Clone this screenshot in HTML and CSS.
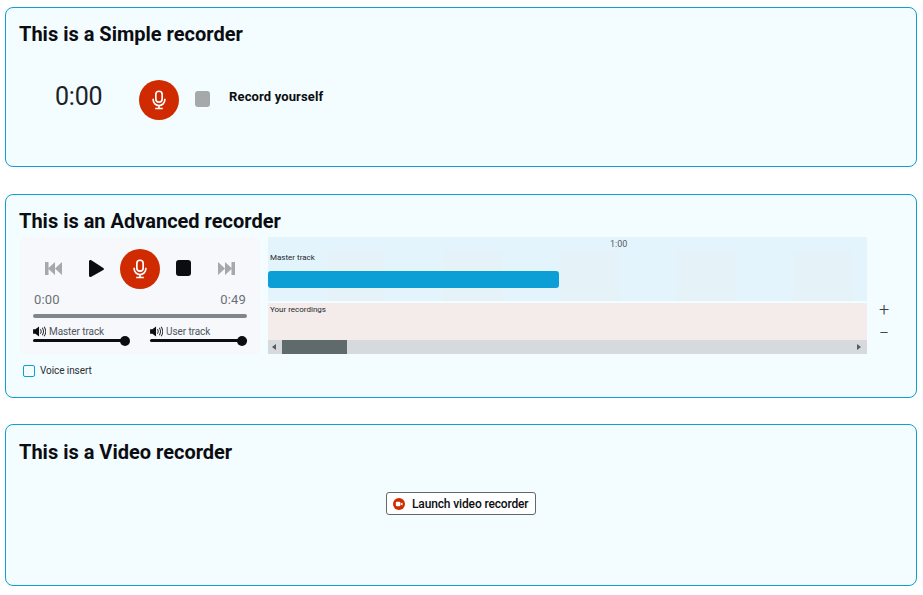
FILE: index.html
```html
<!DOCTYPE html>
<html lang="en">
<head>
<meta charset="utf-8">
<title>Recorders</title>
<link rel="stylesheet" href="styles.css">
</head>
<body>
<svg class="defs" width="0" height="0" aria-hidden="true">
  <symbol id="mic" viewBox="0 0 24 24">
    <rect x="8.2" y="1.5" width="7.600" height="13" rx="3.800" fill="none" stroke="#fff" stroke-width="2"/>
    <path d="M5 10.500v1.200a7 7 0 0 0 14 0v-1.200M12 18.600v3.400M7.400 22.200h9.200" fill="none" stroke="#fff" stroke-width="2"/>
  </symbol>
  <symbol id="speaker" viewBox="0 0 14 12">
    <path d="M0 3.500h2.500L6.500.5v11L2.500 8.500H0z" fill="#0b0d10"/>
    <path d="M8 3.500c1 1.500 1 3.500 0 5M10 2c1.700 2.400 1.700 5.600 0 8M12 .8c2.300 3.200 2.300 7.200 0 10.400" fill="none" stroke="#2c3238" stroke-width="1.100"/>
  </symbol>
</svg>

<main class="page">
  <section class="card card-simple">
    <h2 class="card-title">This is a Simple recorder</h2>
    <div class="simple-row">
      <span class="simple-time">0:00</span>
      <button class="rec-btn"><svg class="mic"><use href="#mic"/></svg></button>
      <span class="stop stop-off"></span>
      <strong class="simple-label">Record yourself</strong>
    </div>
  </section>

  <section class="card card-advanced">
    <h2 class="card-title">This is an Advanced recorder</h2>
    <div class="adv-row">
      <div class="adv-left">
        <div class="panel">
          <div class="transport">
            <svg class="skip" viewBox="0 0 17 13"><path d="M0 0h3.500v13H0zM3 6.500 10 0v13zM10 6.500 17 0v13z" fill="#a6a9a9"/></svg>
            <svg class="play" viewBox="0 0 15 17"><path d="M1.500 0C.6 0 0 .6 0 1.500v14c0 .9.600 1.500 1.500 1.500.3 0 .5-.1.800-.2l12-6.900c.9-.6.900-1.300 0-1.900L2.300.2C2 .1 1.800 0 1.500 0z" fill="#0b0d10"/></svg>
            <button class="rec-btn"><svg class="mic"><use href="#mic"/></svg></button>
            <span class="stop stop-on"></span>
            <svg class="skip" viewBox="0 0 17 13"><path d="M17 0h-3.500v13H17zM14 6.500 7 0v13zM7 6.500 0 0v13z" fill="#a6a9a9"/></svg>
          </div>
          <div class="times"><span>0:00</span><span>0:49</span></div>
          <div class="progress"></div>
          <div class="volumes">
            <div class="volume vol-master">
              <div class="vol-label"><svg class="speaker"><use href="#speaker"/></svg>Master track</div>
              <div class="slider"><span class="knob"></span></div>
            </div>
            <div class="volume vol-user">
              <div class="vol-label"><svg class="speaker"><use href="#speaker"/></svg>User track</div>
              <div class="slider slider-user"><span class="knob"></span></div>
            </div>
          </div>
        </div>
        <label class="voice"><span class="checkbox"></span>Voice insert</label>
      </div>

      <div class="timeline">
        <div class="master">
          <div class="ruler">1:00</div>
          <div class="track-name">Master track</div>
          <div class="clip"></div>
        </div>
        <div class="recordings">
          <div class="rec-name">Your recordings</div>
        </div>
        <div class="scrollbar">
          <span class="arrow arrow-left"></span>
          <span class="thumb"></span>
          <span class="arrow arrow-right"></span>
        </div>
      </div>

      <div class="zoom">
        <span>+</span>
        <span>−</span>
      </div>
    </div>
  </section>

  <section class="card card-video">
    <h2 class="card-title">This is a Video recorder</h2>
    <div class="video-row">
      <button class="video-btn">
        <svg class="cam" viewBox="0 0 12 12"><circle cx="6" cy="6" r="6" fill="#cf2a00"/><rect x="2.800" y="3.800" width="4.600" height="4.400" rx="1" fill="#fff"/><path d="M7.800 5.500l1.700-1v3l-1.700-1z" fill="#fff"/></svg>
        Launch video recorder
      </button>
    </div>
  </section>
</main>
</body>
</html>
```

FILE: styles.css
```css
* { box-sizing: border-box; }
html, body { margin: 0; padding: 0; }
body {
  background: #fff;
  color: #0b0d10;
  font-family: Roboto, "Liberation Sans", sans-serif;
}
.defs { display: block; height: 0; }
.page {
  display: flex;
  flex-direction: column;
  gap: 27px;
  padding: 7px 6px 0 5px;
}
.card {
  background: #f3fcff;
  border: 1px solid #0e9fd4;
  border-radius: 8px;
  padding: 14px 13px 0;
}
.card-simple { height: 160px; }
.card-advanced { height: 204px; }
.card-video { height: 162px; margin-top: -1px; padding-top: 15px; }
.card-title {
  margin: 0;
  font-size: 20px;
  line-height: 24px;
  font-weight: 700;
}
.rec-btn {
  width: 40px;
  height: 40px;
  flex: none;
  padding: 0;
  border: 0;
  border-radius: 50%;
  background: #cf2a00;
  display: flex;
  align-items: center;
  justify-content: center;
}
.mic { width: 20px; height: 24px; }
.stop { display: block; flex: none; border-radius: 3px; }
.stop-off { width: 15px; height: 16px; background: #a6a9a9; }
.stop-on { width: 15px; height: 16px; background: #0b0d10; }

.simple-row {
  display: flex;
  align-items: center;
  height: 40px;
  margin-top: 34px;
  padding-left: 36px;
}
.simple-time {
  width: 84px;
  margin-bottom: 6px;
  font-size: 25px;
  letter-spacing: -0.2px;
  line-height: 30px;
  color: #1c2126;
}
.simple-row .stop-off { margin: 0 19px 2px 16px; }
.simple-label {
  margin-bottom: 7px;
  font-size: 13px;
  font-weight: 700;
  letter-spacing: 0.14px;
}

.adv-row {
  display: flex;
  align-items: flex-start;
  margin-top: 4px;
}
.adv-left { width: 249px; flex: none; margin-left: 1px; }
.panel {
  width: 240px;
  height: 118px;
  background: #f6f8fb;
  border-radius: 6px;
  padding: 12px 13px 0;
}
.transport {
  display: flex;
  align-items: center;
  height: 40px;
  margin-left: 12px;
}
.skip { width: 17px; height: 13px; flex: none; margin-bottom: 2px; }
.play { width: 15px; height: 17px; flex: none; margin: 0 16px 2px 27px; }
.stop-on { margin: 0 27px 2px 16px; }
.times {
  display: flex;
  justify-content: space-between;
  margin-top: 3px;
  padding: 0 1px;
  font-size: 13px;
  letter-spacing: 0.2px;
  line-height: 16px;
  color: #6b7177;
}
.progress {
  height: 4px;
  margin-top: 6px;
  background: #7f878d;
  border-radius: 2px;
}
.volumes {
  display: flex;
  gap: 25px;
  margin-top: 7px;
}
.vol-master { width: 92px; flex: none; }
.vol-user { flex: 1; }
.vol-label {
  display: flex;
  align-items: center;
  gap: 3px;
  height: 13px;
  font-size: 10px;
  letter-spacing: -0.08px;
  color: #4f565c;
}
.speaker { width: 13px; height: 11px; flex: none; }
.slider {
  height: 3px;
  margin-top: 1px;
  background: #0b0d10;
  border-radius: 2px;
  display: flex;
  align-items: center;
  justify-content: flex-end;
}
.knob {
  width: 10px;
  height: 10px;
  margin-right: -5px;
  border-radius: 50%;
  background: #0b0d10;
  flex: none;
}
.slider-user .knob { margin-right: 0; }
.voice {
  display: flex;
  align-items: center;
  gap: 5px;
  margin: 10px 0 0 3px;
  font-size: 10px;
  letter-spacing: -0.08px;
  line-height: 12px;
  color: #2a2f34;
}
.checkbox {
  width: 12px;
  height: 12px;
  border: 1px solid #0e9fd4;
  border-radius: 2px;
  background: #f3fcff;
}

.timeline {
  width: 599px;
  flex: none;
  margin-left: -1px;
  display: flex;
  flex-direction: column;
}
.master {
  height: 64px;
  background-color: #e3f4fc;
  background-image: repeating-linear-gradient(90deg, #e5f2f7 0 58px, transparent 58px 116.800px);
  background-size: 100% 50px;
  background-position: 59px 14px;
  background-repeat: no-repeat;
}
.ruler {
  height: 15px;
  padding-left: 342px;
  font-size: 9px;
  line-height: 14px;
  color: #555b60;
}
.track-name {
  height: 19px;
  padding: 0 0 0 2px;
  font-size: 8px;
  line-height: 12px;
  color: #23282c;
}
.clip {
  width: 291px;
  height: 17px;
  background: #0b9fd6;
  border-radius: 3px;
}
.recordings {
  height: 37px;
  margin-top: 2px;
  background: #f4ecea;
  padding: 1px 2px;
  font-size: 8px;
  line-height: 11px;
  color: #23282c;
}
.scrollbar {
  height: 14px;
  background: #d6dadf;
  display: flex;
  align-items: center;
  padding: 0 6px 0 4px;
}
.arrow { width: 0; height: 0; border-style: solid; flex: none; }
.arrow-left { border-width: 3px 4px 3px 0; border-color: transparent #555b60 transparent transparent; }
.arrow-right { border-width: 3px 0 3px 4px; border-color: transparent transparent transparent #555b60; margin-left: auto; }
.thumb { width: 65px; height: 14px; margin-left: 6px; background: #5f6a6c; flex: none; }
.zoom {
  flex: 1;
  display: flex;
  flex-direction: column;
  align-items: center;
  gap: 5px;
  margin-top: 64px;
  padding-right: 2px;
  font-size: 18px;
  font-weight: 300;
  line-height: 18px;
  color: #3c4248;
}
.zoom span { display: block; }

.video-row {
  display: flex;
  justify-content: center;
  margin-top: 28px;
}
.video-btn {
  display: flex;
  align-items: center;
  gap: 7px;
  width: 150px;
  height: 23px;
  padding: 0 6px;
  border: 1px solid #5f6a6c;
  border-radius: 3px;
  background: #fff;
  color: #0b0d10;
  font-family: Roboto, "Liberation Sans", sans-serif;
  font-size: 12px;
  font-weight: 500;
  letter-spacing: -0.14px;
  white-space: nowrap;
}
.cam { width: 12px; height: 12px; flex: none; }
```
